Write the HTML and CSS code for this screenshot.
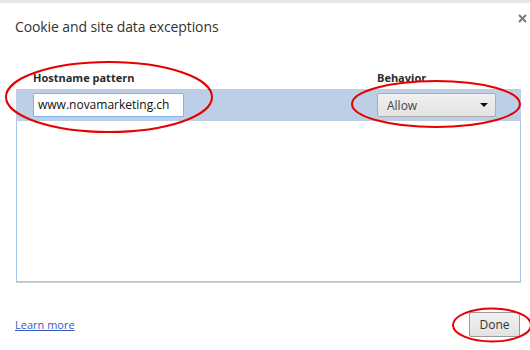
FILE: index.html
```html
<!DOCTYPE html>
<html>
<head>
<meta charset="utf-8">
<link rel="stylesheet" href="styles.css">
</head>
<body>
<div class="page">
  <div class="topbar"></div>
  <div class="header">
    <h1 class="title">Cookie and site data exceptions</h1>
    <svg class="close" width="9" height="9" viewBox="0 0 9 9"><path d="M1 1L8 8M8 1L1 8" /></svg>
  </div>
  <div class="table">
    <div class="cols">
      <span class="colhead">Hostname pattern</span>
      <span class="colhead">Behavior</span>
    </div>
    <div class="list">
      <div class="row cols">
        <div class="input">www.novamarketing.ch</div>
        <div class="select"><span>Allow</span><span class="arrow"></span></div>
      </div>
    </div>
  </div>
  <div class="footer">
    <a class="link" href="#">Learn more</a>
    <button class="done">Done</button>
  </div>
  <svg class="marks" width="530" height="350" viewBox="0 0 530 350">
    <ellipse cx="109" cy="97" rx="103" ry="35" />
    <ellipse cx="436" cy="104" rx="84" ry="23" />
    <ellipse cx="492" cy="325" rx="39" ry="16.5" />
  </svg>
</div>
</body>
</html>
```
FILE: styles.css
```css
* { box-sizing: border-box; }
html, body { margin: 0; padding: 0; background: #fff; }
body { font-family: "Open Sans", "Noto Sans", sans-serif; color: #333; }
.page { position: relative; width: 530px; height: 350px; overflow: hidden; }
.topbar { height: 3px; background: #e6e6e6; }
.header { display: flex; justify-content: space-between; align-items: flex-start; padding: 0 3px 0 15px; }
.title { margin: 14px 0 0 0; font-size: 14px; font-weight: normal; line-height: 20px; color: #333; letter-spacing: -0.1px; }
.close { margin-top: 11px; }
.close path { stroke: #7a7a7a; stroke-width: 2; fill: none; }
.table { margin: 33px 9px 0 16px; }
.cols { display: grid; grid-template-columns: 344px 1fr; padding-left: 17px; }
.colhead { font-size: 11px; font-weight: bold; line-height: 16px; color: #2b2b2b; }
.list { margin-top: 3px; height: 193px; border: 1px solid #a4c7ee; border-top-color: #bccfe6; box-shadow: 0 1px 0 #d0d0d0; }
.row { background: #bccfe6; align-items: center; margin: -1px -1px 0 -1px; padding-left: 17px; height: 32px; }
.input { width: 151px; height: 24px; background: #fff; border: 1px solid #7eb4ea; border-radius: 1px; font-size: 12px; line-height: 22px; padding-left: 4px; color: #111; }
.select { display: flex; justify-content: space-between; align-items: center; width: 119px; height: 24px; border: 1px solid #adadad; border-radius: 2px; background: linear-gradient(#f0f0f0, #e3e3e3); font-size: 12px; color: #444; padding: 0 7px 0 9px; }
.arrow { width: 0; height: 0; border-left: 4px solid transparent; border-right: 4px solid transparent; border-top: 4px solid #111; }
.footer { display: flex; justify-content: space-between; align-items: center; margin: 30px 10px 0 15px; }
.link { font-size: 11px; color: #3858c4; text-decoration: underline; }
.done { width: 51px; height: 25px; border: 1px solid #9a9a9a; border-radius: 2px; background: linear-gradient(#f2f2f2, #e2e2e2); font-family: inherit; font-size: 12px; color: #333; padding: 0; }
.marks { position: absolute; left: 0; top: 0; pointer-events: none; }
.marks ellipse { fill: none; stroke: #e60000; stroke-width: 2; }
```
